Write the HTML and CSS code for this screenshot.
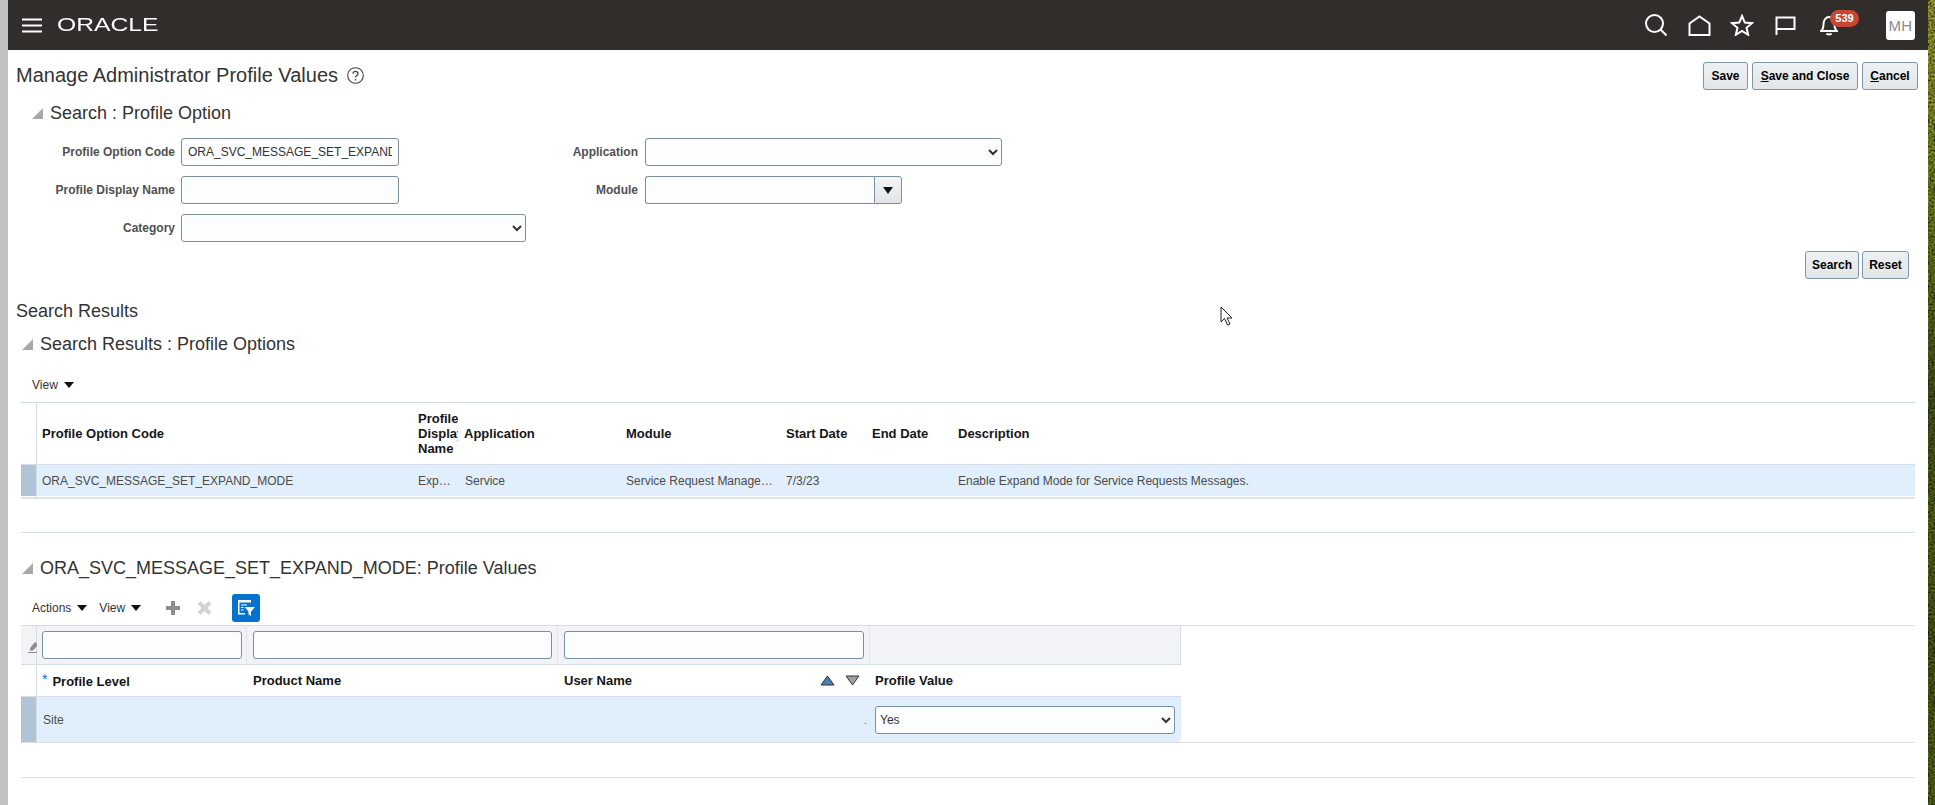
FILE: index.html
```html
<!DOCTYPE html>
<html lang="en">
<head>
<meta charset="utf-8">
<title>Manage Administrator Profile Values</title>
<link rel="stylesheet" href="styles.css">
</head>
<body>
<div class="desktop">
  <div class="left-edge"></div>
  <div class="main">
    <header class="topbar">
      <div class="brand">
        <svg class="burger" width="20" height="15" viewBox="0 0 20 15"><path d="M0 1.5h20M0 7.5h20M0 13.5h20" stroke="#fff" stroke-width="2"/></svg>
        <span class="logo-box"><span class="logo">ORACLE</span></span>
      </div>
      <nav class="nav-icons">
        <svg class="ic ic-search" width="22" height="22" viewBox="0 0 22 22" fill="none" stroke="#fff" stroke-width="2"><circle cx="9.5" cy="9.5" r="8.5"/><path d="M15.5 15.5l6 6"/></svg>
        <svg class="ic ic-home" width="23" height="21" viewBox="0 0 23 21" fill="none" stroke="#fff" stroke-width="2"><path d="M1.5 20V8.500L11.500 1.500l10 7V20z"/></svg>
        <svg class="ic ic-star" width="24" height="22" viewBox="0 0 24 22" fill="none" stroke="#fff" stroke-width="2"><path d="M12 2l2.800 6.600 7.200.6-5.500 4.600 1.700 7L12 16.900 5.800 20.800l1.700-7L2 9.200l7.200-.6z"/></svg>
        <svg class="ic ic-flag" width="21" height="19" viewBox="0 0 21 19" fill="none" stroke="#fff" stroke-width="2"><path d="M1.500 19V1.500h18V13H1.500"/></svg>
        <span class="bell-wrap">
          <svg width="18" height="21" viewBox="0 0 18 21" fill="none" stroke="#fff" stroke-width="2"><path d="M1 16c2-1.500 2.500-3 2.500-7C3.500 5 6 2 9 2s5.500 3 5.500 7c0 4 .5 5.500 2.500 7z"/><path d="M6.500 18.500c.6 1.200 4.400 1.200 5 0"/></svg>
          <span class="badge">539</span>
        </span>
        <span class="avatar">MH</span>
      </nav>
    </header>

    <div class="page-head">
      <h1 class="title">Manage Administrator Profile Values
        <svg class="help" width="17" height="17" viewBox="0 0 17 17" fill="none" stroke="#444"><circle cx="8.500" cy="8.500" r="7.800" stroke-width="1.100"/><path d="M6 6.700c0-3.200 5-3.200 5 0 0 1.900-2.500 1.800-2.500 3.800" stroke-width="1.300"/><path d="M8.500 12v1.500" stroke-width="1.300"/></svg>
      </h1>
      <div class="btns">
        <button class="btn b45" type="button">Save</button>
        <button class="btn b106" type="button"><u>S</u>ave and Close</button>
        <button class="btn b56" type="button"><u>C</u>ancel</button>
      </div>
    </div>

    <h2 class="sec sec-search"><svg class="tri" width="11" height="11" viewBox="0 0 11 11"><path d="M11 0v11H0z" fill="#a8a8a8"/></svg>Search : Profile Option</h2>

    <form class="form">
      <div class="form-col col-a">
        <label class="lbl">Profile Option Code</label>
        <input class="field w218" type="text" value="ORA_SVC_MESSAGE_SET_EXPAND_MODE">
        <label class="lbl">Profile Display Name</label>
        <input class="field w218" type="text">
        <label class="lbl">Category</label>
        <select class="field w345"><option></option></select>
      </div>
      <div class="form-col col-b">
        <label class="lbl">Application</label>
        <select class="field w357"><option></option></select>
        <label class="lbl">Module</label>
        <div class="combo">
          <input class="field combo-input" type="text">
          <span class="combo-btn"><span class="caret"></span></span>
        </div>
      </div>
    </form>

    <div class="search-btns">
      <button class="btn b54" type="button">Search</button>
      <button class="btn b47" type="button">Reset</button>
    </div>

    <h2 class="sec sec-plain">Search Results</h2>
    <h2 class="sec sec-tree sec-results"><svg class="tri" width="11" height="11" viewBox="0 0 11 11"><path d="M11 0v11H0z" fill="#a8a8a8"/></svg>Search Results : Profile Options</h2>

    <div class="toolbar tb-one"><span class="menu">View <span class="caret"></span></span></div>

    <div class="tbl-wrap wrap-one">
      <table class="tbl tbl-one">
        <colgroup>
          <col class="c16"><col class="c375"><col class="c46"><col class="c162"><col class="c160"><col class="c86"><col class="c86"><col>
        </colgroup>
        <thead>
          <tr><th class="sel"></th><th class="code">Profile Option Code</th><th class="narrow">Profile Display Name</th><th>Application</th><th>Module</th><th>Start Date</th><th>End Date</th><th>Description</th></tr>
        </thead>
        <tbody>
          <tr class="row-sel"><td class="sel"></td><td class="code">ORA_SVC_MESSAGE_SET_EXPAND_MODE</td><td class="clip">Expand Mode</td><td class="app-cell">Service</td><td class="clip">Service Request Management</td><td>7/3/23</td><td></td><td>Enable Expand Mode for Service Requests Messages.</td></tr>
        </tbody>
      </table>
    </div>

    <h2 class="sec sec-tree sec-values"><svg class="tri" width="11" height="11" viewBox="0 0 11 11"><path d="M11 0v11H0z" fill="#a8a8a8"/></svg>ORA_SVC_MESSAGE_SET_EXPAND_MODE: Profile Values</h2>

    <div class="toolbar tb-two">
      <span class="menu">Actions <span class="caret"></span></span>
      <span class="menu">View <span class="caret"></span></span>
      <svg class="tool-add" width="14" height="14" viewBox="0 0 14 14"><path d="M5 0h4v5h5v4H9v5H5V9H0V5h5z" fill="#8a8d90"/></svg>
      <svg class="tool-del" width="15" height="14" viewBox="0 0 15 14"><path d="M2 1.500l11 11M13 1.500l-11 11" stroke="#d2d4d6" stroke-width="4" fill="none"/></svg>
      <span class="tool-filter">
        <svg width="17" height="16" viewBox="0 0 17 16" fill="none"><path d="M0 0h13v2.500H0zM0 2h1.500v12H0zM0 13h7v1.500H0z" fill="#fff"/><path d="M3 5h6M3 7.500h2.500M3 10h2.500" stroke="#fff" stroke-width="1.200"/><path d="M6.500 7H17l-4 4.500V16l-2.500-1.500v-3z" fill="#fff"/></svg>
      </span>
    </div>

    <div class="tbl-wrap wrap-two">
      <table class="tbl tbl-two">
        <colgroup>
          <col class="c16"><col class="c210"><col class="c311"><col class="c312"><col class="c311">
        </colgroup>
        <thead>
          <tr class="filter-row">
            <th class="sel erase"><svg width="9" height="12" viewBox="0 0 9 12"><path d="M2 7l5-6 2 1.500V5L5 9.500H2z" fill="#8d8d8d"/><path d="M0 11.500h9" stroke="#8d8d8d"/></svg></th>
            <th class="first-filter"><input class="field w-fill" type="text"></th>
            <th><input class="field w-fill" type="text"></th>
            <th><input class="field w-fill" type="text"></th>
            <th></th>
          </tr>
          <tr class="head-row">
            <th class="sel"></th>
            <th class="code"><span class="req">*</span>Profile Level</th>
            <th>Product Name</th>
            <th><div class="sort-head">User Name
              <span class="sorts">
                <svg width="15" height="11" viewBox="0 0 15 11"><path d="M7.500 1l6.500 9H1z" fill="#4a7fb5" stroke="#333"/></svg>
                <svg width="15" height="11" viewBox="0 0 15 11"><path d="M1 1h13l-6.500 9z" fill="#a0a0a0" stroke="#333"/></svg>
              </span></div></th>
            <th class="last-col">Profile Value</th>
          </tr>
        </thead>
        <tbody>
          <tr class="row-sel row-tall">
            <td class="sel"></td>
            <td>Site</td>
            <td></td>
            <td class="dot-cell">.</td>
            <td class="last-col"><select class="field w-fill"><option>Yes</option></select></td>
          </tr>
        </tbody>
      </table>
    </div>
    <div class="end-rule"></div>

    <svg class="cursor" width="14" height="20" viewBox="0 0 14 20"><path d="M1 1v15l3.500-3.500L7.500 19l2.500-1-3-6h5z" fill="#fff" stroke="#222" stroke-width="1"/></svg>
  </div>
  <div class="wallpaper">
    <svg width="7" height="805"><defs><filter id="grain"><feTurbulence type="fractalNoise" baseFrequency="0.5" numOctaves="2" seed="4"/><feColorMatrix values="0 0 0 0 0  0 0 0 0 0  0 0 0 0 0  0 0 0 -1.600 1.050"/></filter></defs><rect width="7" height="805" filter="url(#grain)"/></svg>
  </div>
</div>
</body>
</html>
```

FILE: styles.css
```css
* { box-sizing: border-box; }
html, body { margin: 0; padding: 0; height: 100%; overflow: hidden; }
body { font-family: "Liberation Sans", Arial, sans-serif; font-size: 12px; color: #333; background: #fff; }

.desktop { display: flex; width: 1935px; height: 805px; }
.left-edge { width: 8px; flex: none; background: #c2c2c2; }
.main { width: 1920px; flex: none; background: #fff; position: relative; }
.wallpaper { width: 7px; flex: none; height: 805px; background: linear-gradient(180deg, #a3a534 0, #8f9a2a 12%, #6f7d1c 30%, #46571a 50%, #5b6a16 66%, #4c5a14 80%, #5a6a18 100%); }
.wallpaper svg { display: block; }

.topbar { height: 50px; background: #312d2a; display: flex; align-items: center; justify-content: space-between; padding: 0 13px 0 14px; }
.brand { display: flex; align-items: center; }
.burger { display: block; }
.logo-box { display: block; width: 100px; margin-left: 15px; height: 20px; }
.logo { display: inline-block; font-size: 18px; line-height: 20px; color: #fff; transform: scaleX(1.37); transform-origin: 0 50%; }
.nav-icons { display: flex; align-items: center; }
.ic { display: block; }
.ic-home { margin-left: 21px; }
.ic-star { margin-left: 19.500px; }
.ic-flag { margin-left: 21px; }
.bell-wrap { position: relative; display: block; width: 18px; height: 21px; margin-left: 24px; margin-right: 48px; }
.bell-wrap svg { display: block; }
.badge { position: absolute; left: 10px; top: -5px; width: 29px; height: 17px; border-radius: 9px; background: #c74634; color: #fff; font-size: 11px; font-weight: 700; line-height: 17px; text-align: center; }
.avatar { width: 29px; height: 29px; border-radius: 3px; background: #fff; color: #8b8b8b; font-size: 15px; line-height: 29px; text-align: center; letter-spacing: .3px; }

.page-head { display: flex; justify-content: space-between; align-items: center; height: 28px; margin-top: 12px; padding: 0 10px 0 8px; }
.title { margin: 0 0 2px; font-size: 20px; font-weight: 400; color: #333; display: flex; align-items: center; }
.help { margin-left: 9px; }
.btns { display: flex; gap: 4px; }
.btn { height: 28px; padding: 0; border: 1px solid #7e95a8; border-radius: 3px; background: linear-gradient(#eef1f3, #e2e6e9); color: #000; font: 700 12px "Liberation Sans", Arial, sans-serif; }
.b45 { width: 45px; }
.b106 { width: 106px; }
.b56 { width: 56px; }
.b54 { width: 54px; }
.b47 { width: 47px; }

.sec { margin: 0; font-size: 18px; font-weight: 400; color: #333; display: flex; align-items: center; height: 24px; line-height: 24px; }
.sec-search { margin-top: 11px; padding-left: 24px; }
.tri { margin-right: 7px; flex: none; }
.sec-plain { margin-top: 20px; padding-left: 8px; }
.sec-tree { padding-left: 14px; }
.sec-results { margin-top: 9px; }
.sec-values { margin-top: 23px; }

.form { display: flex; margin-top: 13px; }
.form-col { display: grid; align-items: center; row-gap: 10px; grid-auto-rows: 28px; justify-items: start; }
.col-a { grid-template-columns: 167px 345px; column-gap: 6px; width: 518px; }
.col-b { grid-template-columns: 112px auto; column-gap: 7px; }
.lbl { justify-self: end; font-size: 12px; font-weight: 700; color: #505050; white-space: nowrap; }
.field { display: block; height: 28px; border: 1px solid #7b8f9f; border-radius: 3px; background-color: #fcfdfe; color: #333; font: 12px "Liberation Sans", Arial, sans-serif; padding: 0 6px; margin: 0; outline: none; }
.w218 { width: 218px; }
.w345 { width: 345px; }
.w357 { width: 357px; }
.w-fill { width: 100%; }
select.field { padding: 0; }

.combo { display: flex; width: 257px; }
.combo-input { width: 229px; border-radius: 3px 0 0 3px; border-right: 0; }
.combo-btn { width: 28px; height: 28px; display: flex; align-items: center; justify-content: center; border: 1px solid #7b8f9f; border-radius: 0 3px 3px 0; background: linear-gradient(#f2f4f5, #e2e5e8); }
.caret { display: inline-block; width: 0; height: 0; border-left: 5px solid transparent; border-right: 5px solid transparent; border-top: 6px solid #111; }
.combo-btn .caret { border-top-width: 7px; }

.search-btns { display: flex; justify-content: flex-end; gap: 3px; margin-top: 9px; padding-right: 19px; }

.toolbar { display: flex; align-items: center; padding-left: 24px; }
.tb-one { height: 24px; margin-top: 17px; }
.tb-two { height: 28px; margin-top: 14px; }
.menu { color: #333; font-size: 12px; display: inline-flex; align-items: center; gap: 6px; margin-right: 12px; }
.tool-add { margin-left: 13px; }
.tool-del { margin-left: 17px; }
.tool-filter { width: 28px; height: 28px; margin-left: 20px; border-radius: 3px; background: #0572ce; display: flex; align-items: center; justify-content: center; }

.tbl-wrap { margin: 0 13px; border-top: 1px solid #d5dee6; }
.wrap-one { margin-top: 5px; height: 131px; border-bottom: 1px solid #d5dee6; }
.wrap-two { margin-top: 3px; height: 118px; border-bottom: 1px solid #dadfe4; }
.end-rule { margin: 34px 13px 0; border-top: 1px solid #d5dee6; }

.tbl { border-collapse: separate; border-spacing: 0; table-layout: fixed; }
.tbl-one { width: 100%; }
.tbl-two { width: 1160px; }
.c16 { width: 16px; }
.c375 { width: 375px; }
.c46 { width: 46px; }
.c162 { width: 162px; }
.c160 { width: 160px; }
.c86 { width: 86px; }
.c210 { width: 210px; }
.c311 { width: 311px; }
.c312 { width: 312px; }

.tbl th { text-align: left; font-size: 13px; font-weight: 700; color: #161616; padding: 0 6px; line-height: 15px; border-bottom: 1px solid #d5dee6; }
.tbl td { font-size: 12px; color: #4b4b4b; padding: 0 6px; white-space: nowrap; overflow: hidden; }
.tbl .sel { padding: 0; border-right: 1px solid #d5dee6; }
.tbl .code { padding-left: 5px; }
.tbl .last-col { padding-left: 5px; }
.tbl .app-cell { padding-left: 7px; }
.tbl-one thead th { height: 62px; }
.tbl-one th.narrow { padding-right: 0; overflow: hidden; }
.tbl-one tbody td { height: 34px; border-bottom: 2px solid #dde3e8; background: #e1effc; box-shadow: inset 0 -1px 0 #fff; }
.tbl .clip { text-overflow: ellipsis; padding-right: 3px; }
.tbl .row-sel td.sel { background: #b0c4d8; }

.filter-row th { height: 39px; background: #f1f3f7; border-right: 1px solid #dfe5ea; padding: 0 5px 0 6px; }
.filter-row th:last-child { border-right: 1px solid #d5dee6; }
.filter-row th.first-filter { padding: 0 4px 0 5px; }
.tbl .erase { vertical-align: middle; text-align: right; padding: 0; }
.erase svg { display: block; margin: 4px 0 0 7px; }
.head-row th { height: 32px; }
.req { color: #0572ce; margin-right: 5px; font-size: 14px; font-weight: 400; vertical-align: 2px; }
.sort-head { display: flex; align-items: center; justify-content: space-between; padding-right: 4px; }
.sorts { display: flex; gap: 10px; }
.sorts svg { display: block; }
.row-tall td { height: 45px; background: #e1effc; }
.dot-cell { text-align: right; color: #b0703a !important; padding-right: 3px !important; }

.cursor { position: absolute; left: 1212px; top: 306px; }
```
